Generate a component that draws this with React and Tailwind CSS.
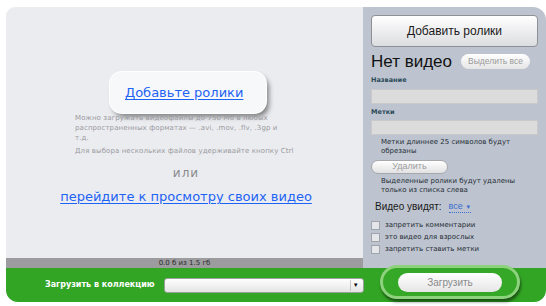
import React from "react";

const dv = "font-['DejaVu_Sans',sans-serif]";
const ls = "font-['Liberation_Sans',Arial,sans-serif]";

function Check({ label }) {
  return (
    <div className="flex h-[12px] items-center">
      <div className="h-[9px] w-[9px] border border-[#a0a4aa] bg-[#e4e6e9]" />
      <span className={`${dv} ml-[5px] text-[7px] leading-[9px] text-[#1e2e36]`}>{label}</span>
    </div>
  );
}

export default function App() {
  return (
    <div className="h-[306px] w-[546px] overflow-hidden bg-white">
      <div className="relative ml-[6px] mt-[7px] w-[540px]">
        <div className="flex">
          {/* left column */}
          <div className="flex w-[357px] flex-col">
            <div className="h-[251px] rounded-tl-[9px] bg-[#ebecf0] pt-[65px]">
              <div className="ml-[104px] flex h-[41px] w-[156px] items-center rounded-[12px] bg-[#f7f8fa] pl-[15px] shadow-[3px_4px_5px_rgba(0,0,0,0.45)] ring-1 ring-white">
                <span className={`${dv} text-[13px] leading-none text-[#1d63f5] underline underline-offset-2`}>
                  Добавьте ролики
                </span>
              </div>
              <div className={`${dv} ml-[69px] w-[222px] text-[7px] leading-[10px] tracking-[0.1px] text-[#9a9a9e]`}>
                <p className="w-[214px]">Можно загружать видеофайлы до 750 Мб в любых распространенных форматах — .avi, .mov, .flv, .3gp и т.д.</p>
                <p className="mt-[3px] whitespace-nowrap">Для выбора нескольких файлов удерживайте кнопку Ctrl</p>
                <div className="mt-[10px] flex justify-center text-[12px] leading-[14px] tracking-[1px] text-[#8a8a8e]">или</div>
                <div className="mt-[9px] flex justify-center whitespace-nowrap text-[13px] leading-[16px] tracking-normal text-[#1d63f5] underline underline-offset-2">
                  перейдите к просмотру своих видео
                </div>
              </div>
            </div>
            <div className={`${dv} flex h-[10px] items-center justify-center bg-[#9c9c9e] text-[7px] leading-none text-[#2a2a2a]`}>
              0.0 б из 1.5 гб
            </div>
          </div>
          {/* right column */}
          <div className="h-[261px] w-[183px] rounded-tr-[13px] bg-[#bec4cf] px-[8px] pt-[8px]">
            <div className={`${ls} flex h-[32px] items-center justify-center rounded-[4px] border border-[#8e9094] bg-gradient-to-b from-white to-[#dcdde0] text-[12px] text-[#1a1a1a]`}>
              Добавить ролики
            </div>
            <div className="mt-[4px] flex h-[20px] items-center">
              <span className={`${ls} text-[17px] leading-none text-[#111]`}>Нет видео</span>
              <div className={`${ls} ml-auto mr-[8px] flex h-[15px] w-[69px] items-center justify-center rounded-full bg-gradient-to-b from-white to-[#e6e6e6] text-[8.5px] text-[#9a9a9a]`}>
                Выделить все
              </div>
            </div>
            <div className={`${dv} mt-[5px] text-[6.5px] font-bold leading-[8px] text-[#2b4a58]`}>Название</div>
            <div className="mt-[5px] h-[15px] border border-[#c9c9c9] bg-[#dcdcdc]" />
            <div className={`${dv} mt-[4px] text-[6.5px] font-bold leading-[8px] text-[#2b4a58]`}>Метки</div>
            <div className="mt-[4px] h-[15px] border border-[#c9c9c9] bg-[#dcdcdc]" />
            <div className={`${dv} mt-[3px] pl-[10px] text-[7px] leading-[9px] text-[#1e2e36]`}>
              Метки длиннее 25 символов будут<br />обрезаны
            </div>
            <div className={`${ls} mt-[4px] flex h-[14px] w-[77px] items-center justify-center rounded-full border border-[#a6a8ac] bg-gradient-to-b from-white to-[#e2e2e4] text-[9px] text-[#9c9c9c]`}>
              Удалить
            </div>
            <div className={`${dv} mt-[3px] pl-[10px] text-[7px] leading-[9px] text-[#1e2e36]`}>
              Выделенные ролики будут удалены<br />только из списка слева
            </div>
            <div className="mt-[6px] flex h-[12px] items-center pl-[4px]">
              <span className={`${ls} text-[10px] leading-none text-[#1a1a1a]`}>Видео увидят:</span>
              <span className={`${ls} ml-[7px] border-b border-dotted border-[#3a6ed0] text-[9px] leading-[10px] text-[#3a6ed0]`}>
                все <span className="text-[6px]">▼</span>
              </span>
            </div>
            <div className="mt-[6px] flex flex-col">
              <Check label="запретить комментарии" />
              <Check label="это видео для взрослых" />
              <Check label="запретить ставить метки" />
            </div>
          </div>
        </div>
        {/* green bar */}
        <div className="relative flex h-[34px] items-center rounded-b-[12px] bg-[#32a524] pl-[39px]">
          <span className={`${dv} text-[8px] font-bold leading-none text-white`}>Загрузить в коллекцию</span>
          <div className="ml-[9px] flex h-[15px] w-[200px] items-center justify-end rounded-[3px] border border-[#9aa09a] bg-gradient-to-b from-white to-[#e4e4e4] pr-[2px]">
            <div className="flex h-[11px] w-[11px] items-center justify-center border-l border-[#c8c8c8] text-[6px] text-black">▼</div>
          </div>
          <div className="absolute left-[374px] top-[-3px] flex h-[34px] w-[140px] items-center justify-center rounded-full border-[3px] border-[#8ed27e] bg-[#35a827] shadow-[1px_3px_3px_rgba(0,0,0,0.5)]">
            <div className={`${ls} flex h-[19px] w-[104px] items-center justify-center rounded-full bg-gradient-to-b from-white to-[#e6e6e6] text-[10px] text-[#8a8a8a]`}>
              Загрузить
            </div>
          </div>
        </div>
      </div>
    </div>
  );
}
